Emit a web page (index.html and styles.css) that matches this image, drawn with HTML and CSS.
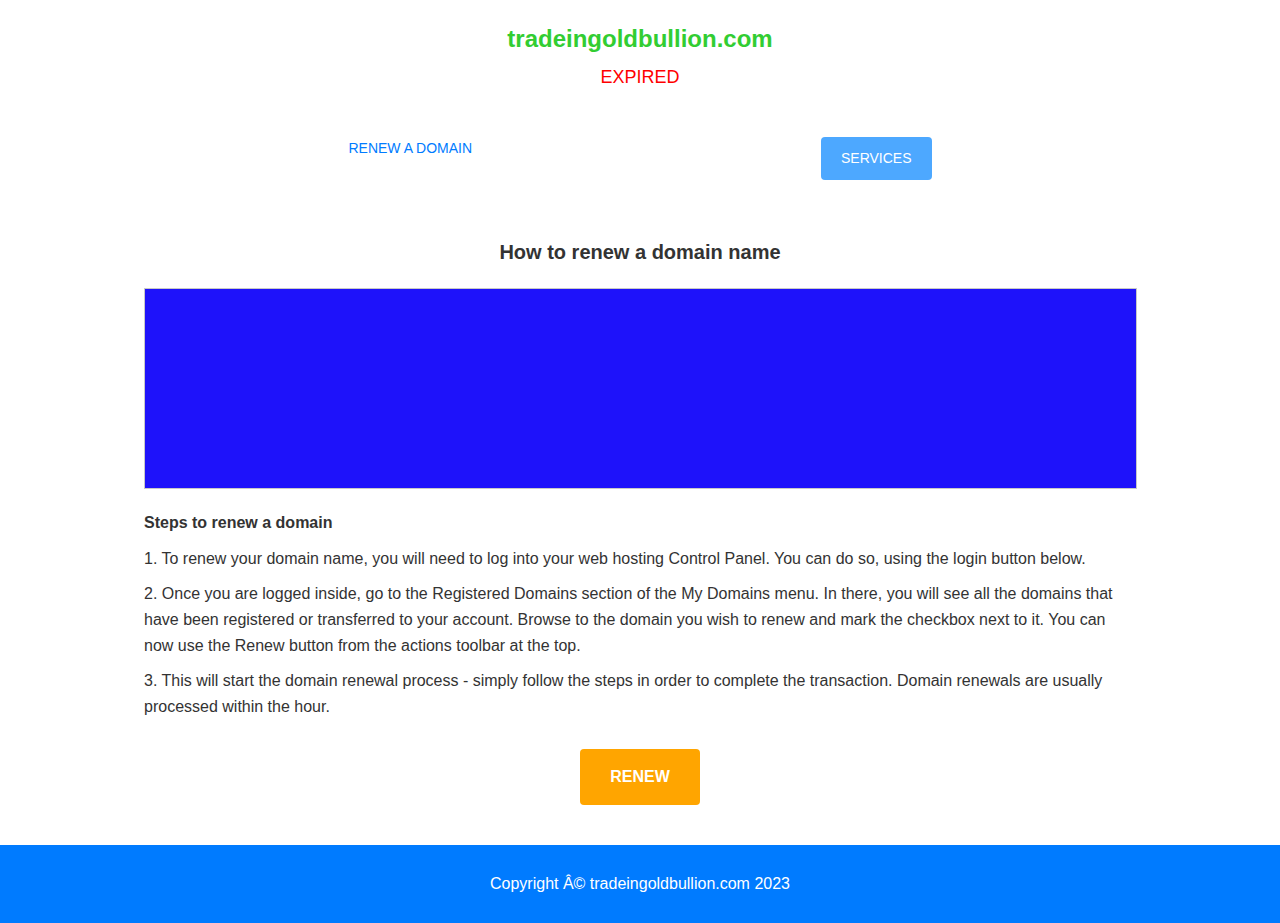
FILE: index.html
```html
<!DOCTYPE html>
<html lang="en">
<head>
<meta charset="utf-8">
<title>tradeingoldbullion.com</title>
<link rel="stylesheet" href="styles.css">
</head>
<body>
<header class="site-header">
  <h1 class="domain">tradeingoldbullion.com</h1>
  <p class="status">EXPIRED</p>
</header>
<nav class="nav">
  <a class="nav-link" href="#">RENEW A DOMAIN</a>
  <a class="nav-button" href="#">SERVICES</a>
</nav>
<main class="content">
  <h2 class="title">How to renew a domain name</h2>
  <div class="banner"></div>
  <h3 class="steps-title">Steps to renew a domain</h3>
  <p class="step step-first">1. To renew your domain name, you will need to log into your web hosting Control Panel. You can do so, using the login button below.</p>
  <p class="step">2. Once you are logged inside, go to the Registered Domains section of the My Domains menu. In there, you will see all the domains that have been registered or transferred to your account. Browse to the domain you wish to renew and mark the checkbox next to it. You can now use the Renew button from the actions toolbar at the top.</p>
  <p class="step">3. This will start the domain renewal process - simply follow the steps in order to complete the transaction. Domain renewals are usually processed within the hour.</p>
  <div class="actions">
    <a class="renew-btn" href="#">RENEW</a>
  </div>
</main>
<footer class="footer">
  <p class="copyright">Copyright Â© tradeingoldbullion.com 2023</p>
</footer>
</body>
</html>
```

FILE: styles.css
```css
* { box-sizing: border-box; }
html, body { margin: 0; padding: 0; }
body {
  font-family: "Liberation Sans", Arial, sans-serif;
  color: #333;
  background: #fff;
}
a { text-decoration: none; }

.site-header {
  text-align: center;
  padding-top: 25px;
}
.domain {
  margin: 0;
  font-size: 24px;
  line-height: 28px;
  font-weight: bold;
  color: #32cd32;
}
.status {
  margin: 13px 0 0;
  font-size: 18px;
  line-height: 22px;
  color: #ff0000;
}

.nav {
  width: 932px;
  margin: 49px auto 0;
  display: flex;
  justify-content: space-around;
  align-items: flex-start;
}
.nav-link {
  font-size: 14px;
  line-height: 16px;
  color: #007bff;
  padding-top: 3px;
}
.nav-button {
  font-size: 14px;
  line-height: 16px;
  color: #fff;
  background: #4da8ff;
  border-radius: 4px;
  padding: 13px 20px 14px;
}

.content {
  width: 992px;
  margin: 0 auto;
}
.title {
  margin: 60px 0 0;
  text-align: center;
  font-size: 20px;
  line-height: 24px;
  font-weight: bold;
  color: #333;
}
.banner {
  margin-top: 24px;
  height: 201px;
  width: 993px;
  background: #1e12fa;
  border: 1px solid #c8c8c8;
}
.steps-title {
  margin: 23px 0 0;
  font-size: 16px;
  line-height: 22px;
  font-weight: bold;
}
.step {
  margin: 9px 0 0;
  font-size: 16px;
  line-height: 26px;
}
.step-first { margin-top: 12px; }
.actions {
  display: flex;
  justify-content: center;
  margin-top: 29px;
}
.renew-btn {
  display: block;
  width: 120px;
  height: 56px;
  line-height: 56px;
  text-align: center;
  background: #ffa500;
  color: #fff;
  font-weight: bold;
  font-size: 16px;
  border-radius: 4px;
}

.footer {
  margin-top: 40px;
  background: #007bff;
  height: 78px;
  display: flex;
  align-items: center;
  justify-content: center;
}
.copyright {
  margin: 0;
  color: #fff;
  font-size: 16px;
  line-height: 20px;
}
```
